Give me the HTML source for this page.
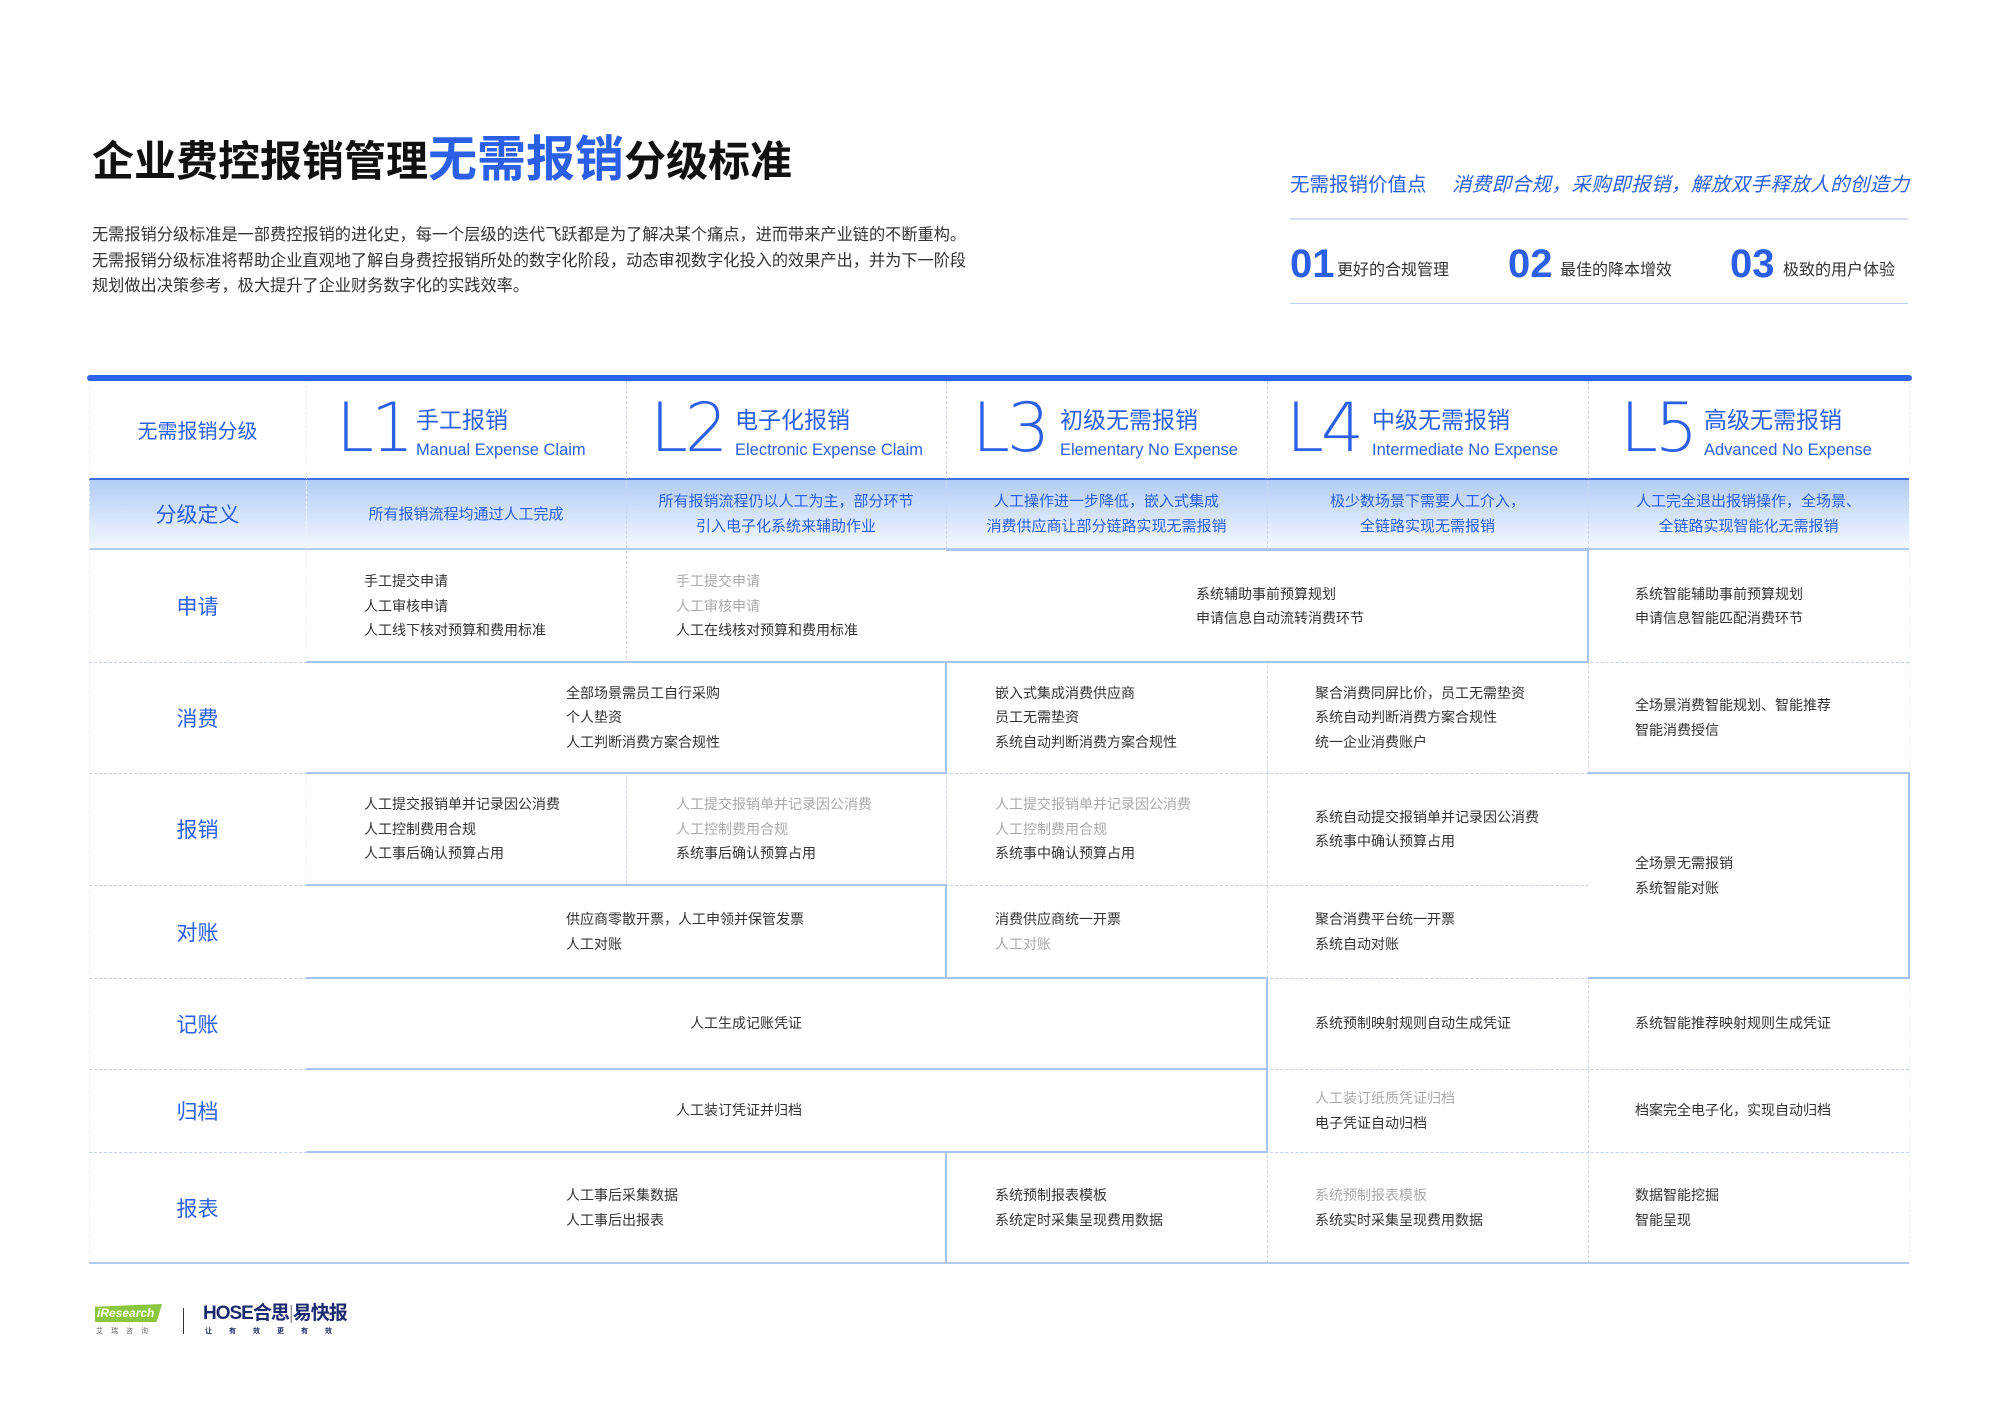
<!DOCTYPE html>
<html><head><meta charset="utf-8">
<style>
*{margin:0;padding:0;box-sizing:border-box}
body{width:2000px;height:1421px;background:#fff;position:relative;overflow:hidden;font-family:"Liberation Sans","Noto Sans CJK SC",sans-serif;color:#333}
.a{position:absolute}
.cell{position:absolute;display:flex;flex-direction:column;justify-content:center;font-size:14px;line-height:24.5px;color:#333;white-space:nowrap;z-index:3}
.g{color:#aaa}
.rl{position:absolute;left:89px;width:217px;display:flex;align-items:center;justify-content:center;font-size:21px;color:#2b5fe6}
.hl{position:absolute;left:89px;width:1820px;border-top:1.5px dashed #bfd0ee}
.vl{position:absolute;border-left:1px dashed #c9d7ef}
.box{position:absolute;border-top:2px solid #a9c3ef;border-right:2px solid #a9c3ef;border-bottom:2px solid #a9c3ef;background:#fff;z-index:1}
.big{position:absolute;top:394px;font-size:68px;line-height:70px;color:#2b5fe6;font-family:"DejaVu Sans ExtraLight","DejaVu Sans","Liberation Sans",sans-serif;font-weight:200;letter-spacing:-3px}
.ht{position:absolute;top:406px;font-size:23px;color:#2b5fe6;line-height:28px}
.he{position:absolute;top:440px;font-size:16.5px;color:#2b5fe6;line-height:20px}
.def{position:absolute;top:478px;height:72px;display:flex;align-items:center;justify-content:center;text-align:center;font-size:15px;line-height:25px;color:#2b5fe6}
</style></head><body>

<div class="a" style="left:92px;top:130px;font-size:42px;font-weight:bold;color:#111;line-height:60px;white-space:nowrap">企业费控报销管理<span style="color:#2b5fe6;font-size:49px">无需报销</span>分级标准</div>
<div class="a" style="left:92px;top:223px;font-size:16.2px;line-height:25.5px;color:#333;width:1000px">无需报销分级标准是一部费控报销的进化史，每一个层级的迭代飞跃都是为了解决某个痛点，进而带来产业链的不断重构。<br>无需报销分级标准将帮助企业直观地了解自身费控报销所处的数字化阶段，动态审视数字化投入的效果产出，并为下一阶段<br>规划做出决策参考，极大提升了企业财务数字化的实践效率。</div>

<div class="a" style="left:1290px;top:168px;font-size:19.5px;color:#2b5fe6;white-space:nowrap">无需报销价值点</div>
<div class="a" style="left:1452px;top:168px;font-size:19.5px;color:#2b5fe6;font-style:italic;white-space:nowrap;letter-spacing:0.4px">消费即合规，采购即报销，解放双手释放人的创造力</div>
<div class="a" style="left:1290px;top:218px;width:618px;border-top:2px solid #d5e2f6"></div>
<div class="a" style="left:1290px;top:241px;font-size:40px;font-weight:bold;color:#2b5fe6;line-height:46px">01</div>
<div class="a" style="left:1337px;top:256px;font-size:16px;color:#333">更好的合规管理</div>
<div class="a" style="left:1508px;top:241px;font-size:40px;font-weight:bold;color:#2b5fe6;line-height:46px">02</div>
<div class="a" style="left:1560px;top:256px;font-size:16px;color:#333">最佳的降本增效</div>
<div class="a" style="left:1730px;top:241px;font-size:40px;font-weight:bold;color:#2b5fe6;line-height:46px">03</div>
<div class="a" style="left:1783px;top:256px;font-size:16px;color:#333">极致的用户体验</div>
<div class="a" style="left:1290px;top:303px;width:618px;border-top:1.5px solid #bcd1f2"></div>

<!-- table -->
<div class="a" style="left:87px;top:375px;width:1825px;height:6px;border-radius:3px;background:#2d62ec"></div>
<div class="a" style="left:89px;top:478px;width:1820px;height:72px;background:linear-gradient(#b3cdf7,#f3f7fe);border-top:2px solid #3f6fe3;border-bottom:2px solid #b4cbf0"></div>

<div class="vl" style="left:89px;top:381px;height:882px;border-color:#eef2f9"></div>
<div class="vl" style="left:306px;top:381px;height:882px;border-color:#eef2f9"></div>
<div class="vl" style="left:626px;top:381px;height:882px"></div>
<div class="vl" style="left:946px;top:381px;height:882px"></div>
<div class="vl" style="left:1267px;top:381px;height:882px"></div>
<div class="vl" style="left:1588px;top:381px;height:882px"></div>
<div class="vl" style="left:1909px;top:381px;height:882px;border-color:#eef2f9"></div>

<div class="hl" style="top:662px"></div>
<div class="hl" style="top:773px"></div>
<div class="hl" style="top:885px"></div>
<div class="hl" style="top:978px"></div>
<div class="hl" style="top:1069px"></div>
<div class="hl" style="top:1152px"></div>
<div class="a" style="left:89px;top:1262px;width:1820px;border-top:2px solid #b4cbf0;z-index:2"></div>

<div class="box" style="left:946px;top:549px;width:643px;height:114px"></div>
<div class="box" style="left:306px;top:661px;width:641px;height:113px"></div>
<div class="box" style="left:1588px;top:772px;width:322px;height:207px"></div>
<div class="box" style="left:306px;top:884px;width:641px;height:95px"></div>
<div class="box" style="left:306px;top:977px;width:962px;height:93px"></div>
<div class="box" style="left:306px;top:1068px;width:962px;height:85px"></div>
<div class="box" style="left:306px;top:1151px;width:641px;height:113px;border-bottom:none"></div>

<!-- header -->
<div class="rl" style="top:381px;height:97px;font-size:20px">无需报销分级</div>
<div class="big" style="left:336px">L1</div><div class="ht" style="left:416px">手工报销</div><div class="he" style="left:416px">Manual Expense Claim</div>
<div class="big" style="left:650px">L2</div><div class="ht" style="left:735px">电子化报销</div><div class="he" style="left:735px">Electronic Expense Claim</div>
<div class="big" style="left:972px">L3</div><div class="ht" style="left:1060px">初级无需报销</div><div class="he" style="left:1060px">Elementary No Expense</div>
<div class="big" style="left:1286px">L4</div><div class="ht" style="left:1372px">中级无需报销</div><div class="he" style="left:1372px">Intermediate No Expense</div>
<div class="big" style="left:1620px">L5</div><div class="ht" style="left:1704px">高级无需报销</div><div class="he" style="left:1704px">Advanced No Expense</div>

<div class="rl" style="top:478px;height:72px">分级定义</div>
<div class="def" style="left:306px;width:320px">所有报销流程均通过人工完成</div>
<div class="def" style="left:626px;width:320px">所有报销流程仍以人工为主，部分环节<br>引入电子化系统来辅助作业</div>
<div class="def" style="left:946px;width:321px">人工操作进一步降低，嵌入式集成<br>消费供应商让部分链路实现无需报销</div>
<div class="def" style="left:1267px;width:321px">极少数场景下需要人工介入，<br>全链路实现无需报销</div>
<div class="def" style="left:1588px;width:321px">人工完全退出报销操作，全场景、<br>全链路实现智能化无需报销</div>

<div class="rl" style="top:550px;height:112px">申请</div>
<div class="rl" style="top:662px;height:111px">消费</div>
<div class="rl" style="top:773px;height:112px">报销</div>
<div class="rl" style="top:885px;height:93px">对账</div>
<div class="rl" style="top:978px;height:91px">记账</div>
<div class="rl" style="top:1069px;height:83px">归档</div>
<div class="rl" style="top:1152px;height:111px">报表</div>

<div class="cell" style="left:364px;top:550px;height:112px">手工提交申请<br>人工审核申请<br>人工线下核对预算和费用标准</div>
<div class="cell" style="left:676px;top:550px;height:112px"><span class="g">手工提交申请</span><span class="g">人工审核申请</span>人工在线核对预算和费用标准</div>
<div class="cell" style="left:1196px;top:550px;height:112px">系统辅助事前预算规划<br>申请信息自动流转消费环节</div>
<div class="cell" style="left:1635px;top:550px;height:112px">系统智能辅助事前预算规划<br>申请信息智能匹配消费环节</div>
<div class="cell" style="left:566px;top:662px;height:111px">全部场景需员工自行采购<br>个人垫资<br>人工判断消费方案合规性</div>
<div class="cell" style="left:995px;top:662px;height:111px">嵌入式集成消费供应商<br>员工无需垫资<br>系统自动判断消费方案合规性</div>
<div class="cell" style="left:1315px;top:662px;height:111px">聚合消费同屏比价，员工无需垫资<br>系统自动判断消费方案合规性<br>统一企业消费账户</div>
<div class="cell" style="left:1635px;top:662px;height:111px">全场景消费智能规划、智能推荐<br>智能消费授信</div>
<div class="cell" style="left:364px;top:773px;height:112px">人工提交报销单并记录因公消费<br>人工控制费用合规<br>人工事后确认预算占用</div>
<div class="cell" style="left:676px;top:773px;height:112px"><span class="g">人工提交报销单并记录因公消费</span><span class="g">人工控制费用合规</span>系统事后确认预算占用</div>
<div class="cell" style="left:995px;top:773px;height:112px"><span class="g">人工提交报销单并记录因公消费</span><span class="g">人工控制费用合规</span>系统事中确认预算占用</div>
<div class="cell" style="left:1315px;top:773px;height:112px">系统自动提交报销单并记录因公消费<br>系统事中确认预算占用</div>
<div class="cell" style="left:1635px;top:773px;height:205px">全场景无需报销<br>系统智能对账</div>
<div class="cell" style="left:566px;top:885px;height:93px">供应商零散开票，人工申领并保管发票<br>人工对账</div>
<div class="cell" style="left:995px;top:885px;height:93px">消费供应商统一开票<span class="g">人工对账</span></div>
<div class="cell" style="left:1315px;top:885px;height:93px">聚合消费平台统一开票<br>系统自动对账</div>
<div class="cell" style="left:690px;top:978px;height:91px">人工生成记账凭证</div>
<div class="cell" style="left:1315px;top:978px;height:91px">系统预制映射规则自动生成凭证</div>
<div class="cell" style="left:1635px;top:978px;height:91px">系统智能推荐映射规则生成凭证</div>
<div class="cell" style="left:676px;top:1069px;height:83px">人工装订凭证并归档</div>
<div class="cell" style="left:1315px;top:1069px;height:83px"><span class="g">人工装订纸质凭证归档</span>电子凭证自动归档</div>
<div class="cell" style="left:1635px;top:1069px;height:83px">档案完全电子化，实现自动归档</div>
<div class="cell" style="left:566px;top:1152px;height:111px">人工事后采集数据<br>人工事后出报表</div>
<div class="cell" style="left:995px;top:1152px;height:111px">系统预制报表模板<br>系统定时采集呈现费用数据</div>
<div class="cell" style="left:1315px;top:1152px;height:111px"><span class="g">系统预制报表模板</span>系统实时采集呈现费用数据</div>
<div class="cell" style="left:1635px;top:1152px;height:111px">数据智能挖掘<br>智能呈现</div>

<!-- logos -->
<div class="a" style="left:95px;top:1304px;width:67px;height:18px;background:#8cc63f;clip-path:polygon(0 15%,100% 0,92% 100%,0 100%)"></div>
<div class="a" style="left:97px;top:1304px;font-size:12px;color:#fff;font-weight:bold;line-height:18px;font-style:italic">iResearch</div>
<div class="a" style="left:96px;top:1326px;font-size:7px;color:#666;letter-spacing:8px">艾瑞咨询</div>
<div class="a" style="left:183px;top:1308px;width:1px;height:26px;background:#333"></div>
<div class="a" style="left:203px;top:1302px;font-size:19px;font-weight:bold;color:#1a2a6c;line-height:24px;white-space:nowrap;letter-spacing:-1px">HOSE合思<span style="font-weight:normal;color:#999">|</span>易快报</div>
<div class="a" style="left:205px;top:1326px;font-size:7px;color:#1a2a6c;letter-spacing:17px;white-space:nowrap;font-weight:bold">让有效更有效</div>
</body></html>
